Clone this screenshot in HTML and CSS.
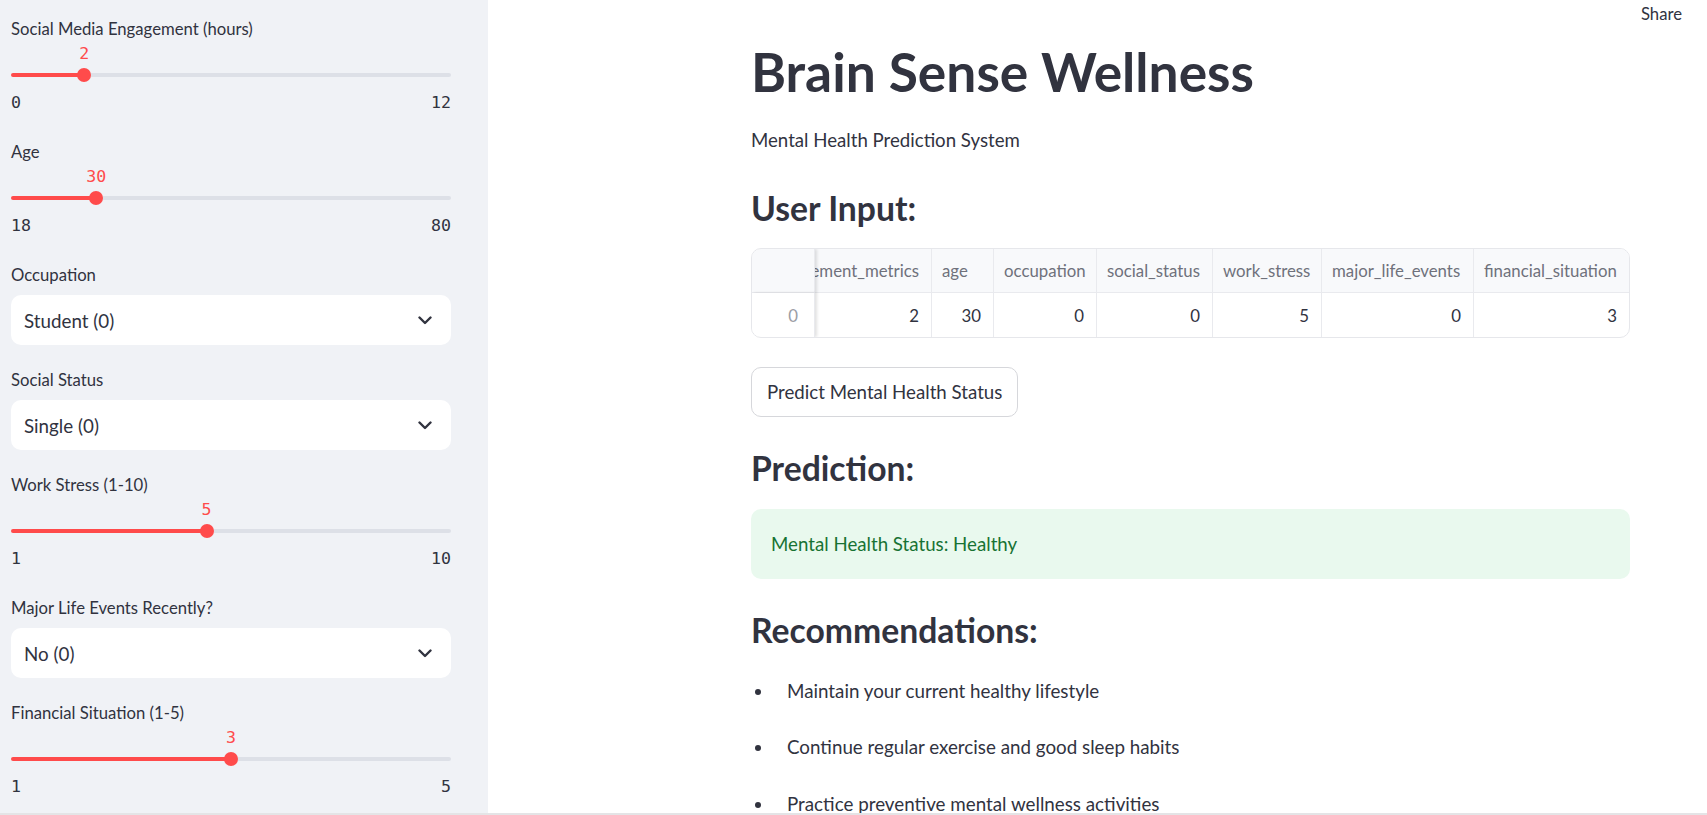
FILE: index.html
```html
<!DOCTYPE html>
<html lang="en">
<head>
<meta charset="utf-8">
<title>Brain Sense Wellness</title>
<link rel="stylesheet" href="styles.css">
</head>
<body>
<div class="app">
  <aside class="sidebar">
    <div class="field slider-field">
      <div class="label">Social Media Engagement (hours)</div>
      <div class="slider" style="--p: 16.667%">
        <div class="value-row"><span class="value">2</span></div>
        <div class="track"><span class="thumb"></span></div>
        <div class="minmax"><span>0</span><span>12</span></div>
      </div>
    </div>
    <div class="field slider-field">
      <div class="label">Age</div>
      <div class="slider" style="--p: 19.355%">
        <div class="value-row"><span class="value">30</span></div>
        <div class="track"><span class="thumb"></span></div>
        <div class="minmax"><span>18</span><span>80</span></div>
      </div>
    </div>
    <div class="field select-field">
      <div class="label">Occupation</div>
      <div class="select"><span>Student (0)</span><svg class="chev" width="14" height="9" viewBox="0 0 14 9"><polyline points="1.5,1.5 7,7 12.5,1.5" fill="none" stroke="#31333f" stroke-width="2.4" stroke-linecap="round" stroke-linejoin="round"/></svg></div>
    </div>
    <div class="field select-field">
      <div class="label">Social Status</div>
      <div class="select"><span>Single (0)</span><svg class="chev" width="14" height="9" viewBox="0 0 14 9"><polyline points="1.5,1.5 7,7 12.5,1.5" fill="none" stroke="#31333f" stroke-width="2.4" stroke-linecap="round" stroke-linejoin="round"/></svg></div>
    </div>
    <div class="field slider-field">
      <div class="label">Work Stress (1-10)</div>
      <div class="slider" style="--p: 44.444%">
        <div class="value-row"><span class="value">5</span></div>
        <div class="track"><span class="thumb"></span></div>
        <div class="minmax"><span>1</span><span>10</span></div>
      </div>
    </div>
    <div class="field select-field">
      <div class="label">Major Life Events Recently?</div>
      <div class="select"><span>No (0)</span><svg class="chev" width="14" height="9" viewBox="0 0 14 9"><polyline points="1.5,1.5 7,7 12.5,1.5" fill="none" stroke="#31333f" stroke-width="2.4" stroke-linecap="round" stroke-linejoin="round"/></svg></div>
    </div>
    <div class="field slider-field">
      <div class="label">Financial Situation (1-5)</div>
      <div class="slider" style="--p: 50%">
        <div class="value-row"><span class="value">3</span></div>
        <div class="track"><span class="thumb"></span></div>
        <div class="minmax"><span>1</span><span>5</span></div>
      </div>
    </div>
  </aside>

  <main class="main">
    <header class="topbar"><span class="share">Share</span></header>
    <section class="content">
      <h1 class="title">Brain Sense Wellness</h1>
      <p class="subtitle">Mental Health Prediction System</p>
      <h3 class="heading h-input">User Input:</h3>

      <div class="table">
        <div class="cell head idx"></div>
        <div class="cell head clip"><span>social_media_engagement_metrics</span></div>
        <div class="cell head">age</div>
        <div class="cell head">occupation</div>
        <div class="cell head">social_status</div>
        <div class="cell head">work_stress</div>
        <div class="cell head">major_life_events</div>
        <div class="cell head last">financial_situation</div>

        <div class="cell body idx">0</div>
        <div class="cell body num">2</div>
        <div class="cell body num">30</div>
        <div class="cell body num">0</div>
        <div class="cell body num">0</div>
        <div class="cell body num">5</div>
        <div class="cell body num">0</div>
        <div class="cell body num last">3</div>
      </div>

      <button class="btn" type="button">Predict Mental Health Status</button>

      <h3 class="heading h-pred">Prediction:</h3>
      <div class="alert">Mental Health Status: Healthy</div>

      <h3 class="heading h-rec">Recommendations:</h3>
      <ul class="recs">
        <li>Maintain your current healthy lifestyle</li>
        <li>Continue regular exercise and good sleep habits</li>
        <li>Practice preventive mental wellness activities</li>
      </ul>
    </section>
  </main>
</div>
</body>
</html>
```
FILE: styles.css
```css
* { box-sizing: border-box; }
html, body { margin: 0; padding: 0; }
body {
  font-family: "Lato", "Liberation Sans", sans-serif;
  color: #31333f;
  background: #ffffff;
}
.app {
  display: flex;
  height: 815px;
  overflow: hidden;
  border-bottom: 2px solid #e4e4e6;
}

/* ---------- sidebar ---------- */
.sidebar {
  flex: 0 0 488px;
  background: #f0f2f6;
  padding: 18px 37px 0 11px;
  display: flex;
  flex-direction: column;
}
.label {
  height: 22px;
  line-height: 22px;
  font-size: 16.7px;
  color: #31333f;
  white-space: nowrap;
}
.slider-field { margin-bottom: 27px; }
.select-field { margin-bottom: 24px; }

.slider { position: relative; }
.value-row {
  position: relative;
  height: 22px;
  margin-top: 3px;
}
.value {
  position: absolute;
  left: var(--p);
  top: 0;
  transform: translateX(-50%);
  line-height: 22px;
  font-family: "DejaVu Sans Mono", "Liberation Mono", monospace;
  font-size: 16.6px;
  color: #ff4b4b;
}
.track {
  position: relative;
  height: 14px;
  margin-top: 3px;
}
.track::before {
  content: "";
  position: absolute;
  left: 0;
  right: 0;
  top: 5px;
  height: 4px;
  border-radius: 2px;
  background: linear-gradient(to right, #ff4b4b 0, #ff4b4b var(--p), #dde0e7 var(--p), #dde0e7 100%);
}
.thumb {
  position: absolute;
  left: var(--p);
  top: 0;
  width: 14px;
  height: 14px;
  margin-left: -7px;
  border-radius: 50%;
  background: #ff4b4b;
}
.minmax {
  display: flex;
  justify-content: space-between;
  height: 22px;
  line-height: 22px;
  margin-top: 10px;
  font-family: "DejaVu Sans Mono", "Liberation Mono", monospace;
  font-size: 16.6px;
  color: #31333f;
}

.select {
  margin-top: 9px;
  height: 50px;
  background: #ffffff;
  border-radius: 10px;
  display: flex;
  align-items: center;
  justify-content: space-between;
  padding: 0 19px 0 13px;
  font-size: 18.8px;
  color: #31333f;
}
.chev { display: block; }

/* ---------- main ---------- */
.main {
  flex: 1 1 auto;
  display: flex;
  flex-direction: column;
  background: #ffffff;
}
.topbar {
  height: 28px;
  display: flex;
  justify-content: flex-end;
  align-items: center;
  padding-right: 25px;
}
.share {
  font-size: 16.7px;
  line-height: 28px;
  color: #31333f;
}
.content {
  margin-left: 263px;
  width: 879px;
  display: flex;
  flex-direction: column;
  align-items: flex-start;
}
.title {
  margin: 11px 0 0;
  font-size: 53.3px;
  font-weight: 700;
  line-height: 64px;
  color: #31333f;
  white-space: nowrap;
}
.subtitle {
  margin: 22px 0 0;
  font-size: 18.65px;
  line-height: 30px;
}
.heading {
  margin: 0;
  font-size: 33.7px;
  font-weight: 700;
  line-height: 44px;
  color: #31333f;
}
.h-input { margin-top: 30.5px; }
.h-pred { margin-top: 28.5px; }
.h-rec { margin-top: 29px; }

/* table */
.table {
  margin-top: 18.5px;
  align-self: stretch;
  display: grid;
  grid-template-columns: 63px 117px 62px 103px 116px 109px 152px 1fr;
  grid-template-rows: 44px 44px;
  border: 1px solid #e6e7eb;
  border-radius: 10px;
  overflow: hidden;
  font-size: 16.8px;
}
.cell {
  display: flex;
  align-items: center;
  white-space: nowrap;
  overflow: hidden;
  border-right: 1px solid #e9eaee;
}
.cell.last { border-right: none; }
.head {
  background: #f8f9fb;
  color: #6f717b;
  padding: 0 10px;
  border-bottom: 1px solid #e9eaee;
}
.head.clip {
  justify-content: flex-end;
  padding-right: 12px;
}
.body {
  justify-content: flex-end;
  padding: 0 12px;
  color: #31333f;
}
.idx {
  position: relative;
  z-index: 1;
  justify-content: flex-end;
  padding-right: 16px;
  box-shadow: 2px 0 3px rgba(0, 0, 0, 0.12);
}
.body.idx { color: #9b9da5; background: #ffffff; }

/* button */
.btn {
  margin-top: 29px;
  height: 50px;
  padding: 0 15px;
  border: 1px solid #d6d7db;
  border-radius: 10px;
  background: #ffffff;
  font-family: "Lato", "Liberation Sans", sans-serif;
  font-size: 18.7px;
  color: #31333f;
}

/* alert */
.alert {
  margin-top: 19.5px;
  align-self: stretch;
  height: 70px;
  display: flex;
  align-items: center;
  padding-left: 20px;
  border-radius: 10px;
  background: #e9f9ee;
  color: #177233;
  font-size: 18.7px;
}

/* list */
.recs {
  list-style: none;
  margin: 23.5px 0 0;
  padding: 0;
}
.recs li {
  position: relative;
  padding-left: 36px;
  line-height: 30px;
  font-size: 18.8px;
  margin-bottom: 26.5px;
  white-space: nowrap;
}
.recs li::before {
  content: "";
  position: absolute;
  left: 4px;
  top: 13px;
  width: 6px;
  height: 6px;
  border-radius: 50%;
  background: #31333f;
}
```
